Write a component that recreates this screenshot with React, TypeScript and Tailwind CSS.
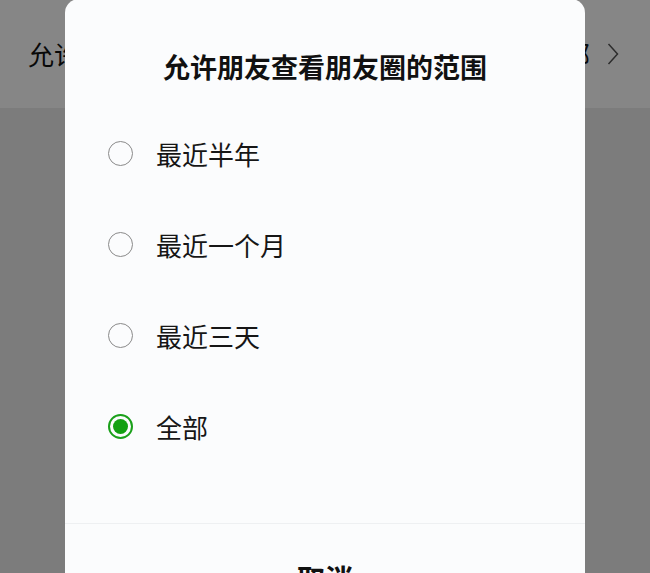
import React from "react";

const font = { fontFamily: '"Noto Sans CJK SC", "Noto Sans", sans-serif' };

function Radio({ checked }: { checked: boolean }) {
  if (checked) {
    return (
      <div className="w-[25px] h-[25px] rounded-full border-[2px] border-[#1aa01a] flex items-center justify-center shrink-0">
        <div className="w-[15px] h-[15px] rounded-full bg-[#13a013]" />
      </div>
    );
  }
  return <div className="w-[25px] h-[25px] rounded-full border-[1.5px] border-[#8a8a8a] shrink-0" />;
}

export default function App() {
  const options = [
    { label: "最近半年", checked: false },
    { label: "最近一个月", checked: false },
    { label: "最近三天", checked: false },
    { label: "全部", checked: true },
  ];
  return (
    <div className="relative w-[650px] h-[573px] overflow-hidden bg-[#ededed]" style={font}>
      {/* background page */}
      <div className="h-[108px] bg-white flex items-center pl-[28px] pr-[31px]">
        <span className="text-[26px] text-[#111] leading-none">允许朋友查看</span>
        <div className="flex-1" />
        <span className="text-[26px] text-[#111] leading-none mr-[17px]">全部</span>
        <svg width="12" height="24" viewBox="0 0 12 24" fill="none">
          <path d="M1.5 2 L10.5 12 L1.5 22" stroke="#555" strokeWidth="1.5" />
        </svg>
      </div>
      {/* overlay */}
      <div className="absolute inset-0 bg-[rgba(0,0,0,0.475)]" />
      {/* dialog */}
      <div className="absolute left-[65px] top-[-1px] w-[520px] h-[620px] bg-[#fbfcfd] rounded-[14px] flex flex-col">
        <div className="pt-[51px] h-[109px] text-center text-[27px] leading-[33px] font-bold text-[#111]">
          允许朋友查看朋友圈的范围
        </div>
        <div className="flex flex-col">
          {options.map((o) => (
            <div key={o.label} className="h-[91px] flex items-center pl-[43px] gap-[23px]">
              <Radio checked={o.checked} />
              <span className="text-[26px] leading-none text-[#161616]">{o.label}</span>
            </div>
          ))}
        </div>
        <div className="h-[51px]" />
        <div className="border-t border-[#eef0f2] pt-[37px] text-center text-[28px] leading-[34px] font-bold text-[#111]">
          取消
        </div>
      </div>
    </div>
  );
}
